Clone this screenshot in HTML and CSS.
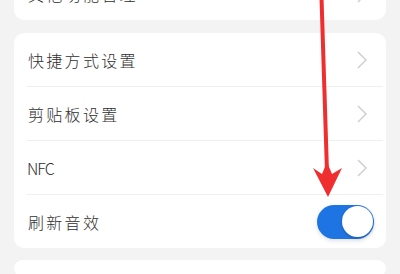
FILE: index.html
```html
<!DOCTYPE html>
<html lang="zh-CN">
<head>
<meta charset="utf-8">
<link rel="stylesheet" href="styles.css">
</head>
<body>
<div class="page">
  <div class="card card-top">
    <div class="row"><span class="label">其他功能管理</span><svg class="chev" width="10" height="18" viewBox="0 0 10 18"><path d="M1 1 L9 9 L1 17" fill="none" stroke="#cdcdcd" stroke-width="1.4"/></svg></div>
  </div>
  <div class="card">
    <div class="row"><span class="label">快捷方式设置</span><svg class="chev" width="10" height="18" viewBox="0 0 10 18"><path d="M1 1 L9 9 L1 17" fill="none" stroke="#cdcdcd" stroke-width="1.4"/></svg></div>
    <div class="divider"></div>
    <div class="row"><span class="label">剪贴板设置</span><svg class="chev" width="10" height="18" viewBox="0 0 10 18"><path d="M1 1 L9 9 L1 17" fill="none" stroke="#cdcdcd" stroke-width="1.4"/></svg></div>
    <div class="divider"></div>
    <div class="row"><span class="label latin">NFC</span><svg class="chev" width="10" height="18" viewBox="0 0 10 18"><path d="M1 1 L9 9 L1 17" fill="none" stroke="#cdcdcd" stroke-width="1.4"/></svg></div>
    <div class="divider"></div>
    <div class="row"><span class="label">刷新音效</span><span class="toggle"><span class="knob"></span></span></div>
  </div>
  <div class="card card-bottom"></div>
</div>
<svg class="arrow" width="400" height="274" viewBox="0 0 400 274">
  <path d="M319.5 -2 L323.5 -2 L329 172 L325 172 Z" fill="#ef2f2f"/>
  <path d="M313 168 L322 174 L327 162 L332 174 L342 168 L328 197 Z" fill="#ef2f2f"/>
</svg>
</body>
</html>
```
FILE: styles.css
```css
html, body {
  margin: 0;
  padding: 0;
  background: #f3f3f3;
  width: 400px;
  height: 274px;
  overflow: hidden;
}
.page {
  padding: 0 14px;
  display: flex;
  flex-direction: column;
  gap: 13px;
}
.card {
  background: #ffffff;
  border-radius: 10px;
}
.card-top {
  margin-top: -33px;
}
.card-bottom {
  height: 17px;
  margin-top: -1px;
}
.row {
  height: 53px;
  display: flex;
  align-items: center;
  justify-content: space-between;
  padding: 0 12px 0 14px;
}
.label {
  font-family: "Noto Sans CJK SC", "Noto Sans", sans-serif;
  font-size: 16px;
  font-weight: 300;
  letter-spacing: 2.3px;
  color: #2e2e2e;
}
.label.latin {
  font-size: 16px;
  letter-spacing: -1px;
  margin-left: -1px;
}
.chev {
  display: block;
  margin-right: 7px;
}
.divider {
  height: 1px;
  background: #efefef;
  margin: 0 3px 0 13px;
}
.toggle {
  width: 57px;
  height: 34px;
  border-radius: 17px;
  background: #1f74e4;
  display: flex;
  align-items: center;
  justify-content: flex-end;
  padding-right: 1px;
  box-sizing: border-box;
  box-shadow: 0 2px 4px rgba(0,0,0,0.12);
}
.knob {
  width: 31px;
  height: 31px;
  border-radius: 50%;
  background: #ffffff;
  box-shadow: 0 1px 3px rgba(0,0,0,0.25);
}
.arrow {
  position: absolute;
  left: 0;
  top: 0;
  pointer-events: none;
}
```
